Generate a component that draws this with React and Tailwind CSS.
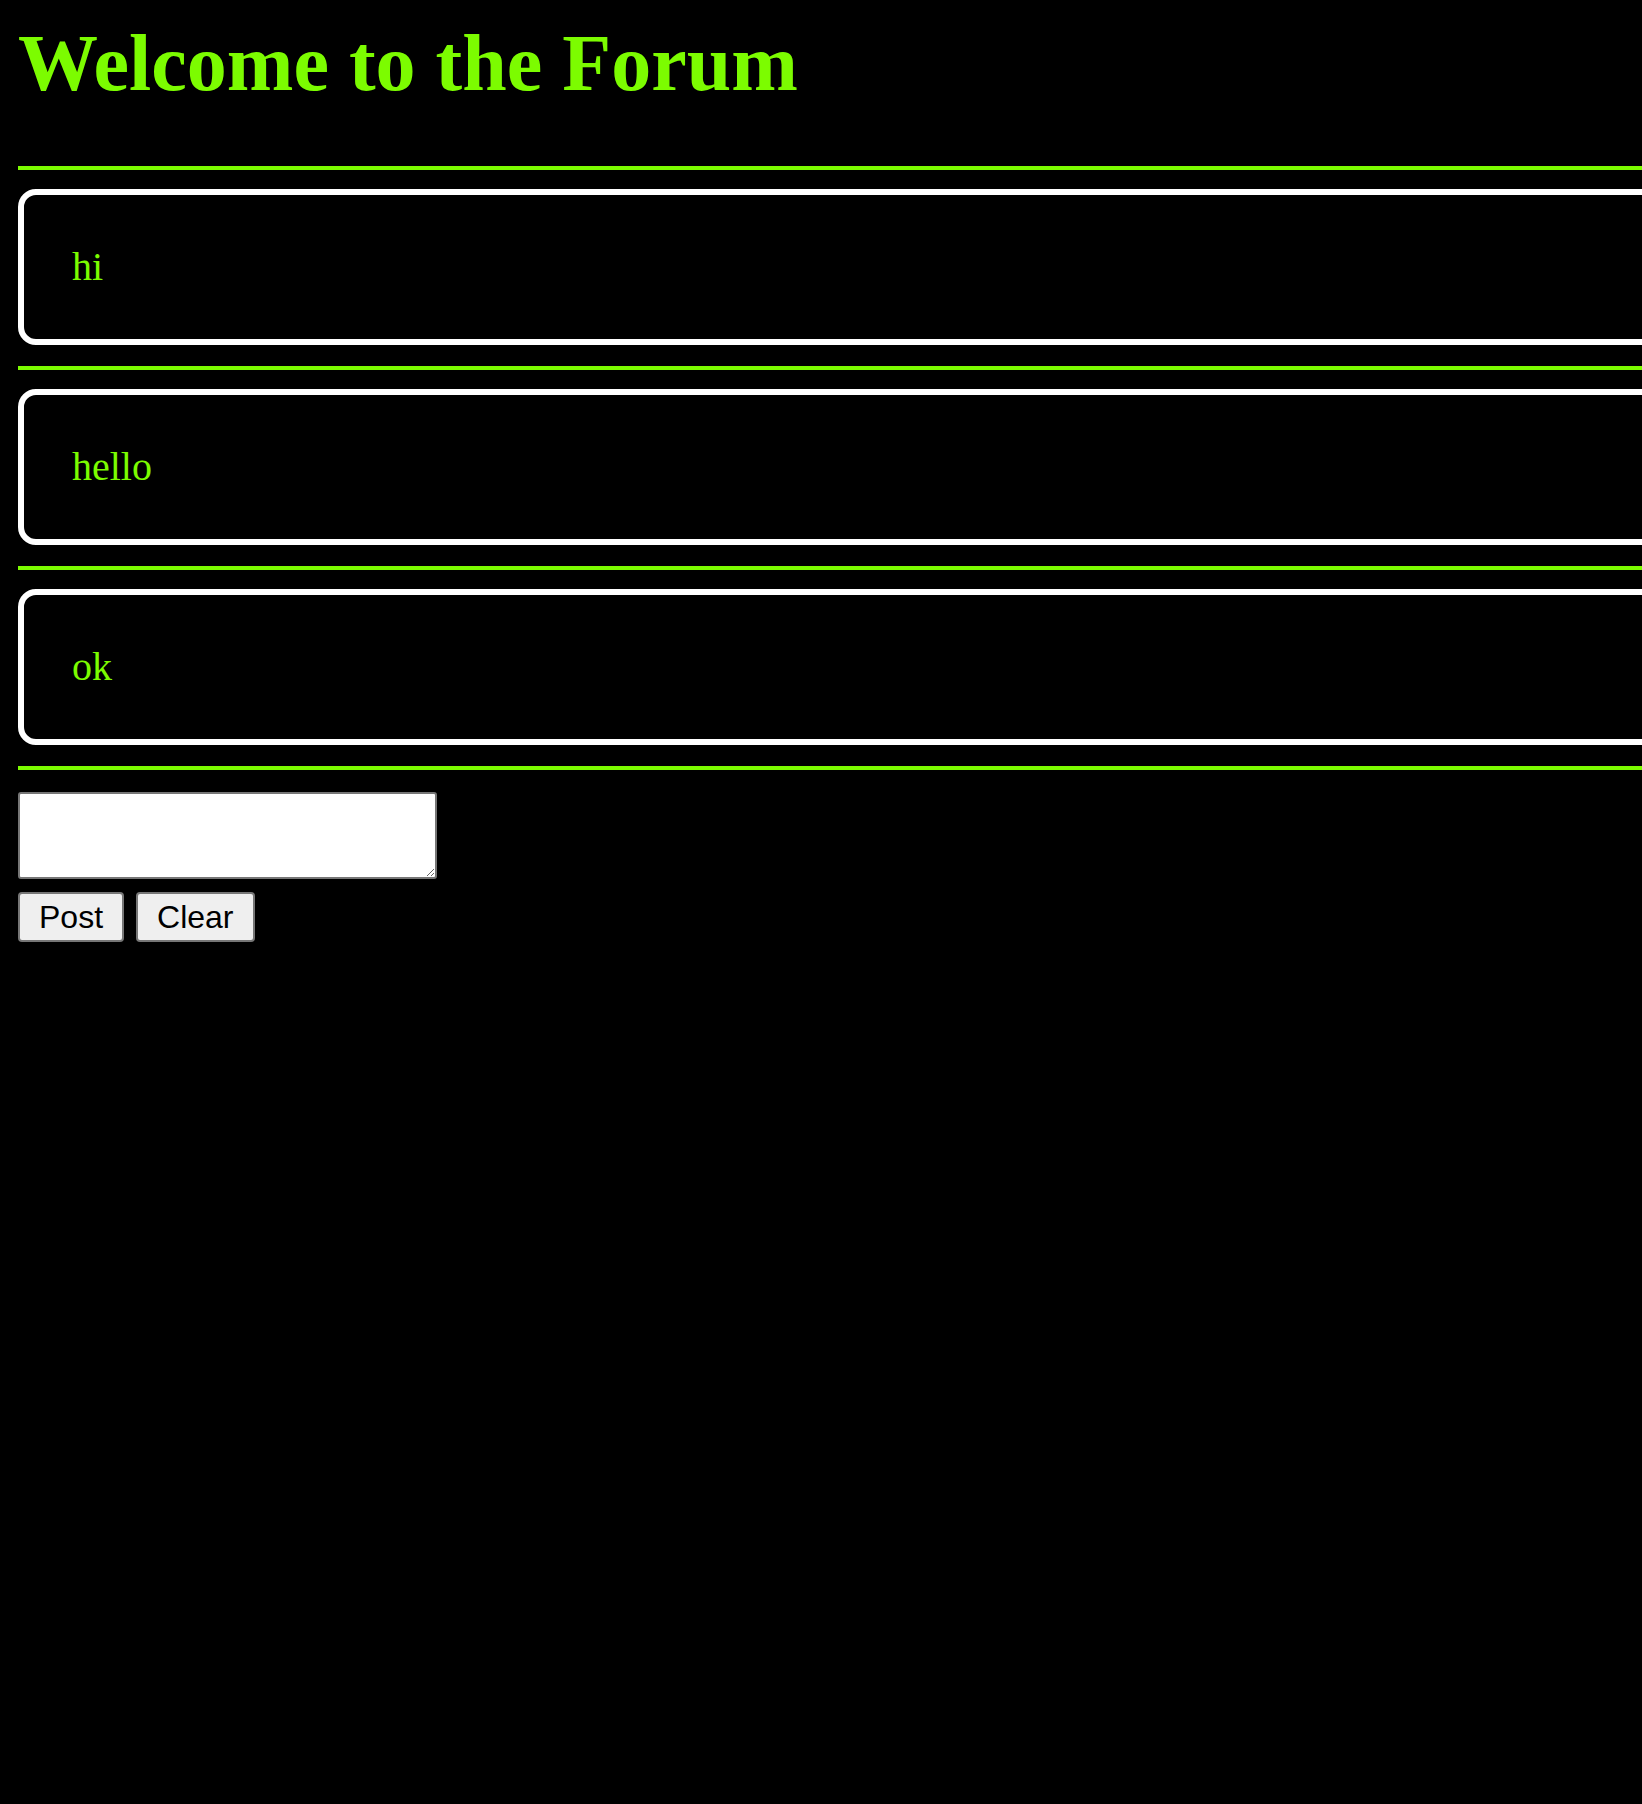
import React from "react";

const posts = ["hi", "hello", "ok"];

function GreenRule({ className = "" }) {
  return <div className={"h-[4px] bg-[#7cfc00] -mr-10 " + className} />;
}

export default function App() {
  return (
    <div className="min-h-screen w-full overflow-hidden bg-black">
      <div className="pl-[18px] pt-[17px] pb-10">
        <h1 className="m-0 font-['Liberation_Serif',_'Times_New_Roman',_serif] text-[80px] font-bold leading-[92px] text-[#7cfc00]">
          Welcome to the Forum
        </h1>

        <GreenRule className="mt-[57px]" />

        {posts.map((p) => (
          <React.Fragment key={p}>
            <div className="mt-[19px] -mr-10 rounded-[18px] border-[6px] border-white px-[48px] py-[49px]">
              <p className="m-0 font-['Liberation_Serif',_'Times_New_Roman',_serif] text-[40px] leading-[46px] text-[#7cfc00]">
                {p}
              </p>
            </div>
            <GreenRule className="mt-[21px]" />
          </React.Fragment>
        ))}

        <div className="mt-[22px] flex flex-col items-start">
          <textarea className="block h-[87px] w-[419px] rounded-[3px] border-2 border-[#767676] bg-white" />
          <div className="mt-[13px] flex gap-[12px]">
            <button className="h-[50px] rounded-[4px] border-2 border-[#767676] bg-[#efefef] px-[19px] font-['Liberation_Sans',_Arial,_sans-serif] text-[32px] leading-none text-black">
              Post
            </button>
            <button className="h-[50px] rounded-[4px] border-2 border-[#767676] bg-[#efefef] px-[19px] font-['Liberation_Sans',_Arial,_sans-serif] text-[32px] leading-none text-black">
              Clear
            </button>
          </div>
        </div>
      </div>
    </div>
  );
}
